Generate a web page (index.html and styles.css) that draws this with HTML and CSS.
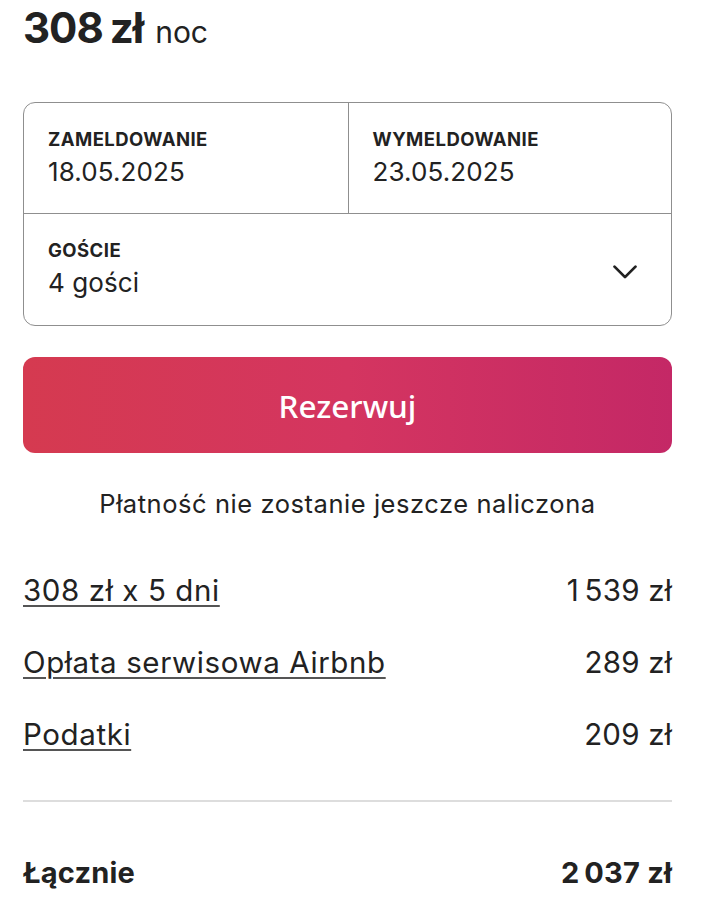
FILE: index.html
```html
<!DOCTYPE html>
<html lang="pl">
<head>
<meta charset="utf-8">
<link rel="stylesheet" href="styles.css">
</head>
<body>
<div class="card">
  <div class="price"><span class="amount">308 zł</span><span class="per">noc</span></div>

  <div class="picker">
    <div class="dates">
      <div class="cell">
        <div class="label">ZAMELDOWANIE</div>
        <div class="value">18.05.2025</div>
      </div>
      <div class="cell cell-right">
        <div class="label">WYMELDOWANIE</div>
        <div class="value">23.05.2025</div>
      </div>
    </div>
    <div class="guests">
      <div class="cell">
        <div class="label">GOŚCIE</div>
        <div class="value">4 gości</div>
      </div>
      <svg class="chevron" viewBox="0 0 32 32" width="28" height="28" aria-hidden="true">
        <path d="M4 11 L16 23 L28 11" fill="none" stroke="#222" stroke-width="3.2" stroke-linecap="round" stroke-linejoin="round"/>
      </svg>
    </div>
  </div>

  <button class="reserve">Rezerwuj</button>

  <p class="note">Płatność nie zostanie jeszcze naliczona</p>

  <div class="lines">
    <div class="line"><span class="link">308 zł x 5 dni</span><span class="amt">1&#8239;539 zł</span></div>
    <div class="line"><span class="link">Opłata serwisowa Airbnb</span><span class="amt">289 zł</span></div>
    <div class="line"><span class="link">Podatki</span><span class="amt">209 zł</span></div>
  </div>

  <div class="total"><span>Łącznie</span><span>2&#8239;037 zł</span></div>
</div>
</body>
</html>
```

FILE: styles.css
```css
* { box-sizing: border-box; }
html, body { margin: 0; padding: 0; background: #fff; }
body {
  font-family: Inter, "Noto Sans", sans-serif;
  color: #222;
}
.card {
  padding: 0 32px 0 23px;
  width: 704px;
}
.price {
  display: flex;
  align-items: baseline;
  line-height: 52px;
  height: 58px;
  padding-top: 2px;
}
.amount { font-size: 42px; font-weight: 700; letter-spacing: -1px; word-spacing: -2px; }
.per { font-size: 30px; font-weight: 400; margin-left: 12px; }

.picker {
  margin-top: 44px;
  border: 1.5px solid #8f8f8f;
  border-radius: 12px;
  overflow: hidden;
}
.dates {
  display: grid;
  grid-template-columns: 1fr 1fr;
  border-bottom: 1.5px solid #8f8f8f;
  height: 111px;
}
.cell { padding: 25px 24px 0; }
.cell-right { border-left: 1.5px solid #8f8f8f; }
.label {
  font-size: 18.5px;
  font-weight: 700;
  letter-spacing: 0.45px;
  line-height: 22px;
}
.value {
  font-size: 26px;
  line-height: 32px;
  margin-top: 6px;
  letter-spacing: 0.1px;
}
.guests {
  height: 111px;
  display: flex;
  justify-content: space-between;
  align-items: center;
}
.guests .cell { align-self: flex-start; padding-top: 25px; }
.chevron { margin-right: 32px; margin-top: 3px; }

.reserve {
  display: block;
  width: 100%;
  margin-top: 31px;
  height: 96px;
  border: 0;
  border-radius: 12px;
  background: linear-gradient(to right, #d53a50 0%, #d43560 50%, #c42866 100%);
  color: #fff;
  font-family: "Noto Sans", "Open Sans", sans-serif;
  font-size: 31.5px;
  font-weight: 500;
}
.note {
  margin: 35px 0 0;
  text-align: center;
  font-size: 25.5px;
  line-height: 32px;
  letter-spacing: 0.55px;
}
.lines { margin-top: 52px; padding-bottom: 48px; border-bottom: 2px solid #dddddd; }
.line {
  display: flex;
  justify-content: space-between;
  font-size: 29.5px;
  line-height: 36px;
  margin-bottom: 36px;
  letter-spacing: 0.6px;
}
.amt { letter-spacing: 0.2px; }
.line:last-child { margin-bottom: 0; }
.link { text-decoration: underline; text-underline-offset: 4px; text-decoration-thickness: 2px; text-decoration-color: #555; }
.total {
  display: flex;
  justify-content: space-between;
  font-size: 29px;
  font-weight: 700;
  margin-top: 53px;
  line-height: 36px;
  letter-spacing: 0.2px;
}
```
